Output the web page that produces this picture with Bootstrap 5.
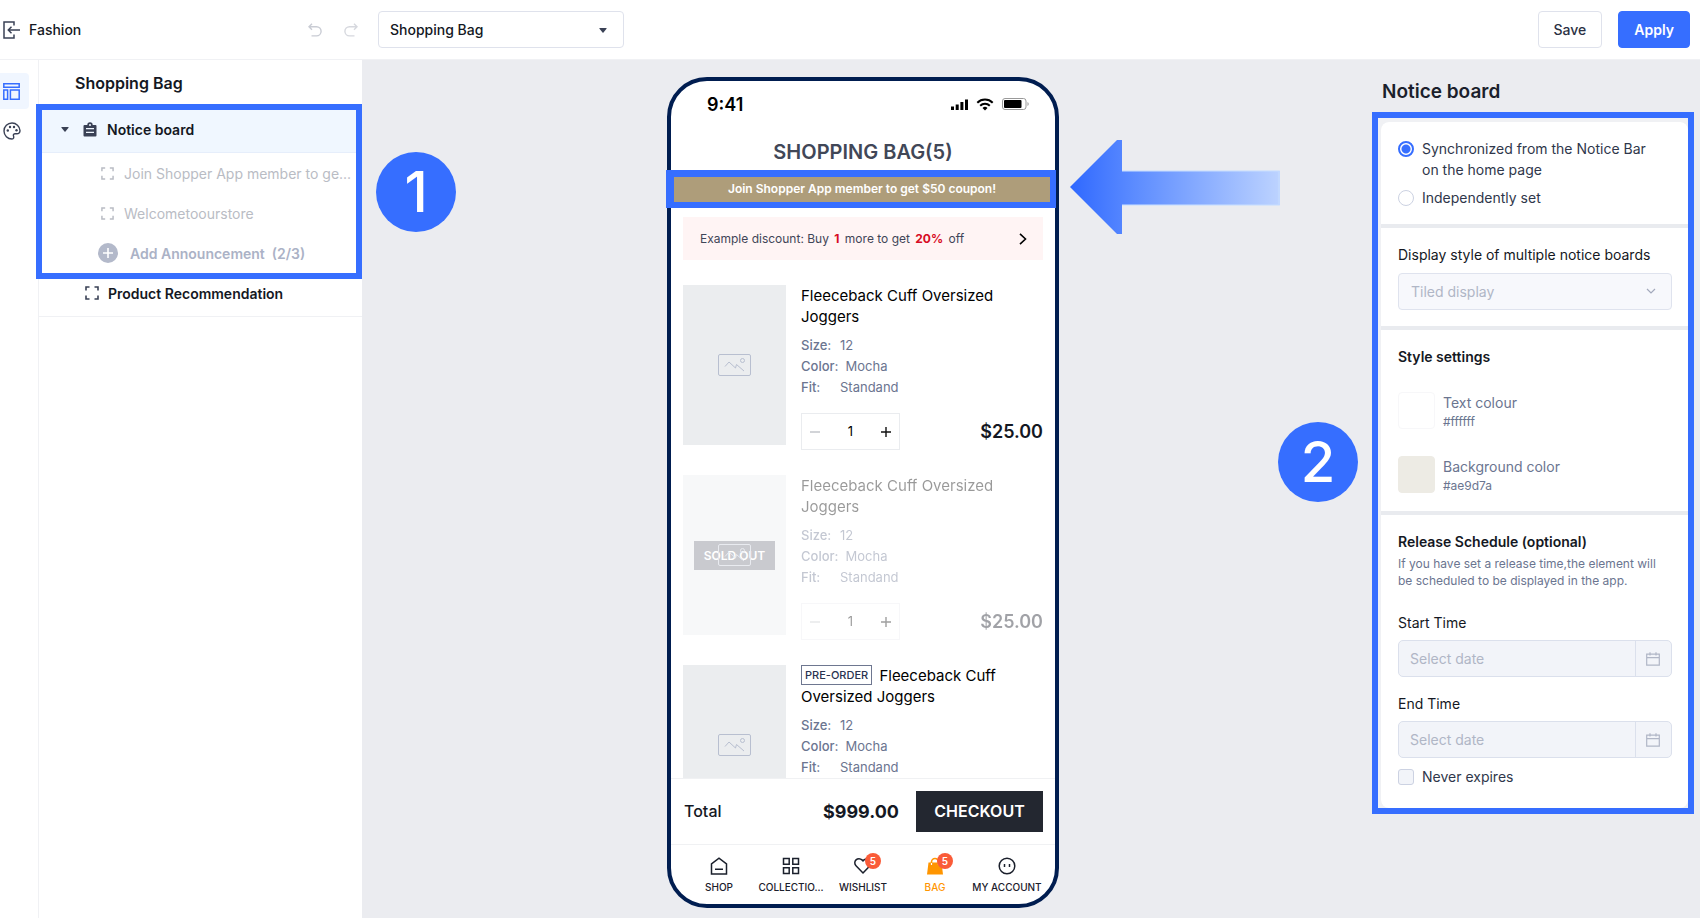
<!DOCTYPE html>
<html lang="en">
<head>
<meta charset="utf-8">
<meta name="viewport" content="width=device-width, initial-scale=1">
<title>Fashion – Shopping Bag</title>
<link href="https://cdn.jsdelivr.net/npm/bootstrap@5.3.0/dist/css/bootstrap.min.css" rel="stylesheet">
<style>
:root{--blue:#366eff;--ink:#141823;--slate:#6b7590;--hush:#b0b6c6}
body{font-family:Inter,"Liberation Sans",sans-serif;font-size:14px;line-height:21px;color:var(--ink);background:#fff}
svg{display:block;flex:none}
a{color:inherit;text-decoration:none}
.fw-mid{font-weight:500}
.fw-semi{font-weight:600}
.f10{font-size:10px}.f12{font-size:12px}.f13{font-size:13px}.f15{font-size:15px}.f16{font-size:16px}.f18{font-size:18px}

/* top bar */
.topbar{height:60px;border-bottom:1px solid #f0f1f4;padding:0 10px 0 3px}
.brand{width:305px}
.redo{margin-left:22px}
.page-pick{position:relative;width:246px;margin-left:20px}
.page-pick select{appearance:none;width:100%;height:37px;border:1px solid #dfe2ec;border-radius:4px;background:#fff;padding:0 11px;font-weight:500;color:var(--ink)}
.page-pick svg{position:absolute;right:17px;top:17px;pointer-events:none}
.bar-btn{height:37px;border-radius:4px;font-size:14px;padding:0 15px;font-weight:500;color:#2b3144;border:1px solid #dfe2ec;background:#fff}
.bar-btn.go{background:var(--blue);border-color:var(--blue);color:#fff;font-weight:600}
.bare{border:0;background:none;padding:0}

/* rail and sidebar */
.rail{width:39px;border-right:1px solid #f0f1f4;padding-top:13px}
.rail a{display:flex;align-items:center;height:36px;width:29px;padding-left:3px;border-radius:0 4px 4px 0}
.rail a.on{background:#f0f6ff}
.sidebar{width:326px;margin-left:-3px;flex:none}
.side-title{height:44px;padding:13px 0 0 39px}
.callout{border:6px solid var(--blue)}
.side-row{height:40px;gap:10px}
.side-row.head{height:43px;background:#f0f7ff;border-bottom:1px solid #e6eefb;padding:0 0 3px 19px}
.side-row.sub{color:#b9bcc4;padding:0 4px 0 59px}
.side-row.add{color:#abb2c6;padding-left:56px;gap:12px}
.side-last{height:38px;padding:0 0 9px 46px;border-bottom:1px solid #f0f1f4;margin-left:3px;gap:9px}

/* canvas */
.stage{background:#ebecf0;min-width:0}
.step{width:80px;height:80px;border-radius:50%;background:var(--blue);color:#fff;font-size:56px;font-weight:500;line-height:80px;text-align:center}
.left-gap{flex:1 1 17px;padding:92px 0 0 14px}
.right-gap{flex:1 1 25px;padding:80px 14px 0 11px}
.right-gap .step{margin:188px 0 0 auto}

/* phone */
.phone{width:392px;margin:17px 0 10px;border:4px solid #001d50;border-radius:40px;background:#fff}
.status{height:46px;padding:0 26px 0 36px;color:#000}
.bag-title{height:43px;padding-top:15px;font-size:20px;color:#414757}
.notice{border:solid var(--blue);border-width:7px 6px 6px 8px;margin:0 -1px 0 -5px;height:38px;background:#ae9d7a;color:#fff;line-height:24px}
.promo{height:43px;margin:9px 12px 25px;padding:0 16px 0 17px;background:#fff4f4;color:#3f4557}
.promo b{color:#d70b24;font-weight:700;margin:0 2px}
.goods{min-height:0;overflow:hidden;padding:0 12px;gap:25px}
.item{gap:15px;height:165px}
.item.gone{opacity:.4}
.thumb{width:103px;height:160px;background:#ebedef}
.thumb svg{position:relative}
.sold{position:absolute;width:81px;height:29px;line-height:29px;background:#787b87;color:#fff;text-align:center}
.props{margin:8px 0 15px;color:var(--slate)}
.props dt{font-weight:500;min-width:32px;margin-right:7px}
.props dd{margin:0}
.qty{width:99px;height:37px;border:1px solid #eaecef}
.qty input{width:30px;border:0;text-align:center;padding:0;font-size:13px;background:none;color:#000}
.pre{display:inline-block;border:1px solid #6e7790;font-size:11px;line-height:18px;padding:0 3px;margin-right:3px;color:#2a3350;vertical-align:top;font-weight:500}
.pay{height:66px;border-top:1px solid #f0f1f3;padding:0 12px 0 13px}
.checkout{width:127px;height:41px;margin-left:17px;background:#232730;color:#fff}
.tabs{height:60px;border-top:1px solid #f0f1f3;padding:9px 12px 0}
.tabs a{flex:1 1 0;min-width:0;line-height:16px;font-weight:500;white-space:nowrap;color:#1b202c}
.tabs a.on{color:#ff9500}
.tabs span.ic{position:relative;display:block;margin-bottom:1px}
.dot{position:absolute;left:11px;top:-1px;width:16px;height:16px;border-radius:50%;background:#fa5b38;color:#fff;font-weight:600;text-align:center}

/* settings panel */
.panel{width:328px;flex:none;padding:20px 6px 0 0}
.panel h1{font-size:19px;line-height:24px;margin:0 0 8px 10px;color:#1b1f2c}
.panel .callout{background:#f0f1f4;padding:4px 0 0 3px}
.sheet{display:flex;flex-direction:column;gap:4px;background:#e9ebef;border-radius:8px;overflow:hidden}
.sheet section{background:#fff;padding:16px 16px 16px 17px}
.sheet section:last-child{padding-bottom:21px}
.sheet h2{font-size:14px;line-height:21px;margin:0;font-weight:600}
.tick{appearance:none;flex:none;width:16px;height:16px;margin:3px 8px 0 0;border:1px solid #ccd2e2;background:#fff}
.tick[type=radio]{border-radius:50%}
.tick[type=checkbox]{border-radius:3px;background:#f2f4f9}
.tick:checked{border:2px solid var(--blue);background:radial-gradient(circle,var(--blue) 4px,#fff 5px)}
.choice{color:#2f374b}
.choice+.choice{margin-top:7px}
.tile{position:relative;margin-top:8px}
.tile select{appearance:none;width:100%;height:37px;border:1px solid #dfe3ee;border-radius:4px;background:#f7f8fc;color:var(--hush);padding:0 12px;opacity:1}
.tile svg{position:absolute;right:16px;top:15px}
.swatch{width:37px;height:37px;border-radius:4px;border:1px solid #f7f7f9;padding:0;background:#fff}
.swatch.sand{background:#edebe4;border-color:#edebe4}
.hue{color:var(--slate);gap:8px;margin-top:25px}
.hue .f12{line-height:18px}
.note{line-height:17px;color:var(--slate);margin:3px 0 23px}
.date{height:37px;border:1px solid #dbe0ec;border-radius:5px;background:#f2f4f9;margin:7px 0 16px;overflow:hidden}
.date input{flex:1;min-width:0;border:0;background:none;padding:0 11px}
.date input::placeholder{color:var(--hush);opacity:1}
.date button{width:36px;border:0;border-left:1px solid #dbe0ec;background:none;padding:0 0 0 10px}
</style>
</head>
<body class="vh-100 d-flex flex-column overflow-hidden">

<svg width="0" height="0" class="position-absolute" aria-hidden="true">
  <symbol id="frame" viewBox="0 0 14 14"><path d="M1 4.5V1h3.5M9.500 1H13v3.500M13 9.500V13H9.500M4.500 13H1V9.500" fill="none" stroke="currentColor" stroke-width="1.600"/></symbol>
  <symbol id="caret" viewBox="0 0 8 5"><path d="M.8 0h6.400q.8 0 .3.700L4.500 4.500q-.5.500-1 0L.5.700Q0 0 .8 0z" fill="#3a4155"/></symbol>
  <symbol id="pic" viewBox="0 0 33 22"><rect x=".5" y=".5" width="32" height="21" rx="1.500" fill="none" stroke="currentColor"/><circle cx="24.500" cy="6.500" r="2" fill="none" stroke="currentColor"/><path d="M7 12.500l4-4.500 6.500 6 1-3.500 7.500 6.500" fill="none" stroke="currentColor" stroke-linejoin="round"/></symbol>
  <symbol id="cal" viewBox="0 0 14 14"><path d="M.7 2.200h12.600v11H.7zM.7 5.700h12.600M4 .3v3.200M10 .3v3.200" fill="none" stroke="#b0b6c6" stroke-width="1.200"/></symbol>
</svg>

<header class="topbar d-flex align-items-center flex-shrink-0">
  <div class="brand d-flex align-items-center flex-grow-0">
    <a href="#" class="d-flex align-items-center fw-mid">
      <svg width="18" height="18" viewBox="0 0 18 18" fill="none" stroke="#3a4155" stroke-width="1.500"><path d="M11 4.500V1H1v16h10v-3.500M17 9H5.500M8.500 5.800L5.300 9l3.200 3.200"/></svg>
      <span class="ms-2">Fashion</span>
    </a>
  </div>
  <button class="bare" aria-label="Undo"><svg width="14" height="14" viewBox="0 0 14 14" fill="none" stroke="#c9ccd4" stroke-width="1.400"><path d="M4 .7L1 3.700l3 3M1.300 3.700H8.500a4.600 4.600 0 010 9.200H3.500"/></svg></button>
  <button class="bare redo" aria-label="Redo"><svg width="14" height="14" viewBox="0 0 14 14" fill="none" stroke="#d6d8de" stroke-width="1.400"><path d="M10 .7l3 3-3 3M12.700 3.700H5.500a4.600 4.600 0 000 9.200H10.500"/></svg></button>
  <div class="page-pick">
    <select aria-label="Page"><option>Shopping Bag</option></select>
    <svg width="8" height="5"><use href="#caret"/></svg>
  </div>
  <button class="bar-btn ms-auto">Save</button>
  <button class="bar-btn go ms-3">Apply</button>
</header>

<div class="d-flex flex-grow-1 overflow-hidden">
  <nav class="rail flex-shrink-0" aria-label="Tools">
    <a href="#" class="on" aria-label="Layout"><svg width="17" height="17" viewBox="0 0 17 17" fill="none" stroke="#366eff" stroke-width="1.500"><path d="M.8.800h15.400v3.400H.8zM.8 7h3.800v9.200H.8zM7.400 7h8.800v9.200H7.400z"/></svg></a>
    <a href="#" class="mt-1" aria-label="Theme"><svg width="18" height="18" viewBox="0 0 18 18"><path d="M9 1a8 8 0 018 7.500c.1 2.200-1.300 3.200-3.200 3.200h-1.600c-1.500 0-2.200 1.100-1.700 2.300.6 1.400.2 3-1.500 3A8 8 0 019 1z" fill="none" stroke="#3a4155" stroke-width="1.400"/><g fill="#3a4155"><circle cx="4.800" cy="8.500" r="1.200"/><circle cx="7" cy="5" r="1.200"/><circle cx="11" cy="5" r="1.200"/><circle cx="13.500" cy="8.300" r="1.200"/></g></svg></a>
  </nav>

  <aside class="sidebar">
    <div class="side-title f16 fw-semi">Shopping Bag</div>
    <div class="callout position-relative bg-white">
      <div class="side-row head d-flex align-items-center fw-semi">
        <svg width="8" height="5"><use href="#caret"/></svg>
        <svg class="ms-1" width="14" height="15" viewBox="0 0 14 15"><path d="M1.500 3h2.800a2.700 2.700 0 015.400 0h2.800a1 1 0 011 1v9.500a1 1 0 01-1 1h-11a1 1 0 01-1-1V4a1 1 0 011-1z" fill="#3a4155"/><circle cx="7" cy="3" r="1" fill="#f0f7ff"/><path d="M3 6.700h8M3 10.300h8" stroke="#f0f7ff" stroke-width="1.200"/></svg>
        <span>Notice board</span>
      </div>
      <div class="side-row sub d-flex align-items-center"><svg width="13" height="13"><use href="#frame"/></svg><span class="text-nowrap">Join Shopper App member to ge...</span></div>
      <div class="side-row sub d-flex align-items-center"><svg width="13" height="13"><use href="#frame"/></svg><span>Welcometoourstore</span></div>
      <button class="bare side-row add d-flex align-items-center fw-semi"><svg width="20" height="20" viewBox="0 0 20 20"><circle cx="10" cy="10" r="10" fill="#b3b9ca"/><path d="M10 5v10M5 10h10" stroke="#fff" stroke-width="1.600"/></svg><span>Add Announcement&nbsp; (2/3)</span></button>
    </div>
    <div class="side-last d-flex align-items-center fw-semi"><svg width="14" height="14" color="#3a4155"><use href="#frame"/></svg><span>Product Recommendation</span></div>
  </aside>

  <main class="stage d-flex flex-grow-1">
    <div class="left-gap"><div class="step">1</div></div>

    <div class="phone d-flex flex-column flex-shrink-0">
      <div class="status d-flex align-items-center flex-shrink-0">
        <span class="f18 fw-semi me-auto">9:41</span>
        <svg width="17" height="11" viewBox="0 0 17 11"><path d="M0 7.500h3V11H0zM4.700 5.500h3V11h-3zM9.400 3h3v8h-3zM14 .5h3V11h-3z"/></svg>
        <svg class="ms-2" width="18" height="13" viewBox="0 0 18 13"><g fill="none" stroke="#000" stroke-width="2"><path d="M1.300 4.700a11 11 0 0115.400 0M4.200 7.700a6.800 6.800 0 019.600 0"/></g><path d="M9 12.500L6.500 10a3.500 3.500 0 015 0z"/></svg>
        <svg class="ms-2" width="27" height="12" viewBox="0 0 27 12"><rect x=".5" y=".5" width="23.500" height="11" rx="2.500" fill="none" stroke="#999"/><rect x="2" y="2" width="17.500" height="8" rx="1"/><path d="M25.500 4v4q1.200-.5 1.200-2t-1.200-2z" fill="#999"/></svg>
      </div>
      <div class="bag-title fw-semi text-center flex-shrink-0">SHOPPING BAG(5)</div>
      <div class="notice position-relative f12 fw-semi text-center flex-shrink-0">Join Shopper App member to get $50 coupon!</div>
      <div class="promo f12 d-flex align-items-center flex-shrink-0">
        <span class="me-auto">Example discount: Buy <b>1</b> more to get <b>20%</b> off</span>
        <svg width="8" height="12" viewBox="0 0 8 12" fill="none" stroke="#000" stroke-width="1.600"><path d="M1 .8L6.500 6 1 11.200"/></svg>
      </div>

      <div class="goods d-flex flex-column flex-grow-1">
        <article class="item d-flex flex-shrink-0">
          <div class="thumb d-flex align-items-center justify-content-center flex-shrink-0"><svg width="33" height="22" color="#b8bfd0"><use href="#pic"/></svg></div>
          <div class="flex-grow-1">
            <div class="f15 text-black pe-4">Fleeceback Cuff Oversized Joggers</div>
            <dl class="props f13"><div class="d-flex"><dt>Size:</dt><dd>12</dd></div><div class="d-flex"><dt>Color:</dt><dd>Mocha</dd></div><div class="d-flex"><dt>Fit:</dt><dd>Standand</dd></div></dl>
            <div class="d-flex align-items-center justify-content-between">
              <div class="qty d-flex align-items-center justify-content-around"><button class="bare" aria-label="Less"><svg width="10" height="10"><path d="M0 5h10" stroke="#b5b8be" stroke-width="1.200"/></svg></button><input aria-label="Quantity" value="1"><button class="bare" aria-label="More"><svg width="10" height="10"><path d="M0 5h10M5 0v10" stroke="#111" stroke-width="1.400"/></svg></button></div>
              <span class="f18 fw-semi">$25.00</span>
            </div>
          </div>
        </article>

        <article class="item gone d-flex flex-shrink-0">
          <div class="thumb d-flex align-items-center justify-content-center flex-shrink-0 position-relative"><span class="sold f12 fw-semi">SOLD OUT</span><svg width="33" height="22" color="#c8ccda"><use href="#pic"/></svg></div>
          <div class="flex-grow-1">
            <div class="f15 text-black pe-4">Fleeceback Cuff Oversized Joggers</div>
            <dl class="props f13"><div class="d-flex"><dt>Size:</dt><dd>12</dd></div><div class="d-flex"><dt>Color:</dt><dd>Mocha</dd></div><div class="d-flex"><dt>Fit:</dt><dd>Standand</dd></div></dl>
            <div class="d-flex align-items-center justify-content-between">
              <div class="qty d-flex align-items-center justify-content-around"><button class="bare" aria-label="Less"><svg width="10" height="10"><path d="M0 5h10" stroke="#b5b8be" stroke-width="1.200"/></svg></button><input aria-label="Quantity" value="1"><button class="bare" aria-label="More"><svg width="10" height="10"><path d="M0 5h10M5 0v10" stroke="#111" stroke-width="1.400"/></svg></button></div>
              <span class="f18 fw-semi">$25.00</span>
            </div>
          </div>
        </article>

        <article class="item d-flex flex-shrink-0">
          <div class="thumb d-flex align-items-center justify-content-center flex-shrink-0"><svg width="33" height="22" color="#b8bfd0"><use href="#pic"/></svg></div>
          <div class="flex-grow-1">
            <div class="f15 text-black pe-4"><span class="pre">PRE-ORDER</span> Fleeceback Cuff Oversized Joggers</div>
            <dl class="props f13"><div class="d-flex"><dt>Size:</dt><dd>12</dd></div><div class="d-flex"><dt>Color:</dt><dd>Mocha</dd></div><div class="d-flex"><dt>Fit:</dt><dd>Standand</dd></div></dl>
          </div>
        </article>
      </div>

      <div class="pay d-flex align-items-center flex-shrink-0">
        <span class="f16 fw-mid me-auto">Total</span>
        <span class="f18 fw-bold">$999.00</span>
        <button class="bare checkout f16 fw-semi">CHECKOUT</button>
      </div>
      <nav class="tabs f10 d-flex text-center flex-shrink-0" aria-label="App tabs">
        <a href="#" class="d-flex flex-column align-items-center"><span class="ic"><svg width="18" height="24" viewBox="0 -3 18 24" fill="none" stroke="currentColor" stroke-width="1.500"><path d="M1.500 17V6.800L9 1.200l7.500 5.600V17zM5 12.300h8"/></svg></span>SHOP</a>
        <a href="#" class="d-flex flex-column align-items-center"><span class="ic"><svg width="18" height="24" viewBox="0 -3 18 24" fill="none" stroke="currentColor" stroke-width="1.500"><path d="M1.500 1.500h5.700v5.700H1.500zM10.800 1.500h5.700v5.700h-5.700zM1.500 10.800h5.700v5.700H1.500zM10.800 10.800h5.700v5.700h-5.700z"/></svg></span>COLLECTIO...</a>
        <a href="#" class="d-flex flex-column align-items-center"><span class="ic"><svg width="18" height="24" viewBox="0 -3 18 24" fill="none" stroke="currentColor" stroke-width="1.500"><path d="M9 16L2 8.800A4.200 4.200 0 018 2.900l1 1 1-1a4.200 4.200 0 016 5.900z" stroke-linejoin="round"/></svg><span class="dot">5</span></span>WISHLIST</a>
        <a href="#" class="on d-flex flex-column align-items-center"><span class="ic"><svg width="18" height="24" viewBox="0 -3 18 24"><path d="M2.500 5.500h13L17 17.500H1z" fill="currentColor"/><path d="M5.500 8V5a3.500 3.500 0 017 0v3" fill="none" stroke="currentColor" stroke-width="1.600"/><path d="M5.500 6v2M12.500 6v2" stroke="#fff" stroke-width="1.200"/></svg><span class="dot">5</span></span>BAG</a>
        <a href="#" class="d-flex flex-column align-items-center"><span class="ic"><svg width="18" height="24" viewBox="0 -3 18 24" fill="none" stroke="currentColor" stroke-width="1.500"><circle cx="9" cy="9" r="7.800"/><path d="M6.500 7v3M11.500 7v3"/></svg></span>MY ACCOUNT</a>
      </nav>
    </div>

    <div class="right-gap">
      <svg width="210" height="94" viewBox="0 0 210 94"><defs><linearGradient id="fade"><stop offset="0" stop-color="#2f68ff"/><stop offset=".3" stop-color="#5b8bff"/><stop offset="1" stop-color="#bdd3ff"/></linearGradient></defs><path d="M0 47L47 0h5v31h158v34H52v29h-5z" fill="url(#fade)"/><path d="M52 31h157v34H52" fill="none" stroke="#c5ddff" stroke-width="1.500" opacity=".7"/></svg>
      <div class="step">2</div>
    </div>

    <aside class="panel">
      <h1 class="fw-semi">Notice board</h1>
      <div class="callout">
        <form class="sheet">
          <section>
            <label class="choice d-flex"><input class="tick" type="radio" name="source" checked><span class="pe-2">Synchronized from the Notice Bar on the home page</span></label>
            <label class="choice d-flex"><input class="tick" type="radio" name="source"><span>Independently set</span></label>
          </section>
          <section>
            <label for="style" class="d-block">Display style of multiple notice boards</label>
            <div class="tile"><select id="style" disabled><option>Tiled display</option></select><svg width="10" height="7" viewBox="0 0 10 7"><path d="M1 1l4 4 4-4" fill="none" stroke="#a3a9bc" stroke-width="1.200"/></svg></div>
          </section>
          <section>
            <h2>Style settings</h2>
            <div class="hue d-flex"><button type="button" class="swatch" aria-label="Text colour"></button><div><div>Text colour</div><div class="f12">#ffffff</div></div></div>
            <div class="hue d-flex"><button type="button" class="swatch sand" aria-label="Background color"></button><div><div>Background color</div><div class="f12">#ae9d7a</div></div></div>
          </section>
          <section>
            <h2>Release Schedule (optional)</h2>
            <p class="note f12">If you have set a release time,the element will be scheduled to be displayed in the app.</p>
            <label for="start" class="d-block">Start Time</label>
            <div class="date d-flex"><input id="start" placeholder="Select date"><button type="button" aria-label="Pick start date"><svg width="14" height="14"><use href="#cal"/></svg></button></div>
            <label for="end" class="d-block">End Time</label>
            <div class="date d-flex mb-2"><input id="end" placeholder="Select date"><button type="button" aria-label="Pick end date"><svg width="14" height="14"><use href="#cal"/></svg></button></div>
            <label class="choice d-flex"><input class="tick" type="checkbox"><span>Never expires</span></label>
          </section>
        </form>
      </div>
    </aside>
  </main>
</div>
<script src="https://cdn.jsdelivr.net/npm/bootstrap@5.3.0/dist/js/bootstrap.bundle.min.js"></script>
</body>
</html>
